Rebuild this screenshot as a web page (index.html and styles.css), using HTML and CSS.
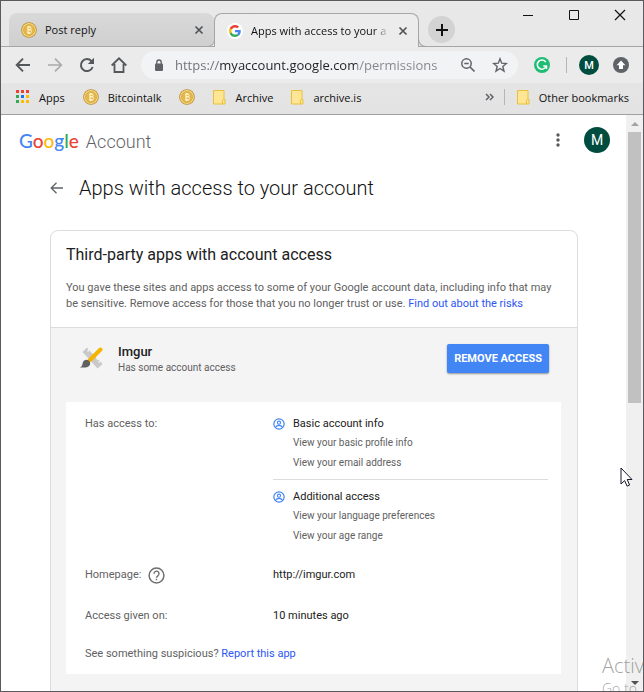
FILE: index.html
```html
<!DOCTYPE html>
<html lang="en">
<head>
<meta charset="utf-8">
<meta name="viewport" content="width=device-width, initial-scale=1">
<title>Apps with access to your account</title>
<link rel="stylesheet" href="styles.css">
</head>
<body>
<svg class="defs" aria-hidden="true">
  <symbol id="coin" viewBox="0 0 16 16">
    <circle cx="8" cy="8" r="7.8" fill="#b98a2b"/>
    <circle cx="8" cy="8" r="7" fill="#f8dc82"/>
    <circle cx="8" cy="8" r="5.500" fill="#e6b84c" stroke="#c99a35" stroke-width=".6"/>
    <path d="M6 5.200h2.800c1.700 0 1.700 2.600 0 2.600H7h2c2.100 0 2.100 3 0 3H6M7 5.200v5.600M7.400 4v1.200M8.900 4v1.200M7.400 10.800V12M8.900 10.800V12" fill="none" stroke="#fff8da" stroke-width="1"/>
  </symbol>
  <symbol id="folder" viewBox="0 0 13 15">
    <path d="M.5.5h10.500v9h1v4.500H.5z" fill="#ffe694" stroke="#e8c13c"/>
    <path d="M9.500 14v-3.500q0-1 1-1h.5" fill="none" stroke="#e8c13c"/>
  </symbol>
  <symbol id="close" viewBox="0 0 10 10"><path d="M1.500 1.500l7 7M8.500 1.500l-7 7" fill="none" stroke="#505357" stroke-width="1.700"/></symbol>
  <symbol id="person" viewBox="0 0 24 24">
    <circle cx="12" cy="12" r="10.300" fill="none" stroke="#4285f4" stroke-width="2.400"/>
    <circle cx="12" cy="9.300" r="3.100" fill="none" stroke="#4285f4" stroke-width="2.200"/>
    <path d="M5 18.500c2-3 4.500-3.700 7-3.700s5 .7 7 3.700" fill="none" stroke="#4285f4" stroke-width="2.400"/>
  </symbol>
</svg>
<div class="window">
  <header class="chrome">
    <div class="tabstrip">
      <div class="tab">
        <svg class="icon16"><use href="#coin"/></svg>
        <span class="tab-title">Post reply</span>
        <button class="plain" aria-label="Close tab"><svg class="icon10"><use href="#close"/></svg></button>
      </div>
      <div class="tab tab-active">
        <svg class="icon16" viewBox="0 0 16 16"><circle cx="8" cy="8" r="8" fill="#fff"/><g transform="translate(2 2) scale(.25)"><path fill="#ea4335" d="M24 9.500c3.540 0 6.710 1.220 9.210 3.600l6.850-6.850C35.900 2.380 30.470 0 24 0 14.620 0 6.510 5.380 2.560 13.220l7.980 6.190C12.430 13.720 17.740 9.500 24 9.500z"/><path fill="#4285f4" d="M46.980 24.550c0-1.570-.15-3.090-.38-4.550H24v9.020h12.940c-.58 2.960-2.260 5.480-4.780 7.180l7.730 6c4.510-4.180 7.090-10.360 7.090-17.650z"/><path fill="#fbbc05" d="M10.530 28.590c-.48-1.450-.76-2.990-.76-4.590s.27-3.140.76-4.590l-7.980-6.190C.92 16.460 0 20.120 0 24c0 3.880.92 7.540 2.560 10.780l7.970-6.190z"/><path fill="#34a853" d="M24 48c6.480 0 11.930-2.130 15.890-5.810l-7.730-6c-2.150 1.450-4.920 2.300-8.160 2.300-6.260 0-11.570-4.220-13.470-9.910l-7.980 6.190C6.510 42.620 14.620 48 24 48z"/></g></svg>
        <span class="tab-title tab-fade">Apps with access to your a</span>
        <button class="plain" aria-label="Close tab"><svg class="icon10"><use href="#close"/></svg></button>
      </div>
      <button class="plain new-tab" aria-label="New tab"><svg width="14" height="14" viewBox="0 0 14 14"><path d="M7 1v12M1 7h12" stroke="#111" stroke-width="2"/></svg></button>
      <div class="captions">
        <button class="plain" aria-label="Minimize"><svg width="12" height="12" viewBox="0 0 12 12"><path d="M1 6.500h10" stroke="#111"/></svg></button>
        <button class="plain" aria-label="Maximize"><svg width="12" height="12" viewBox="0 0 12 12"><path d="M1.500 1.500h9v9h-9z" fill="none" stroke="#111"/></svg></button>
        <button class="plain" aria-label="Close"><svg width="12" height="12" viewBox="0 0 12 12"><path d="M1 1l10 10M11 1L1 11" stroke="#111" stroke-width="1.200"/></svg></button>
      </div>
    </div>
    <div class="toolbar">
      <button class="plain" aria-label="Back"><svg width="16" height="16" viewBox="0 0 16 16"><path d="M15 8H2M8 1.700L1.700 8 8 14.300" fill="none" stroke="#54575b" stroke-width="1.900"/></svg></button>
      <button class="plain" aria-label="Forward"><svg width="16" height="16" viewBox="0 0 16 16"><path d="M1 8h13M8 1.700L14.300 8 8 14.300" fill="none" stroke="#ababab" stroke-width="1.700"/></svg></button>
      <button class="plain" aria-label="Reload"><svg width="16" height="16" viewBox="0 0 16 16"><path d="M13.600 10A6 6 0 1 1 12.500 4.200L13.500 5.300" fill="none" stroke="#54575b" stroke-width="2"/><path d="M15 .8V7H8.800z" fill="#54575b"/></svg></button>
      <button class="plain" aria-label="Home"><svg width="16" height="16" viewBox="0 0 16 16"><path d="M.7 8.500L8 1.300l7.300 7.200M3.500 7v8h9V7" fill="none" stroke="#54575b" stroke-width="1.800"/></svg></button>
      <div class="omnibox">
        <svg width="10" height="13" viewBox="0 0 10 13"><rect x="1" y="4.500" width="8" height="7.500" rx="1" fill="#5f6368"/><path d="M2.800 5V3.200a2.200 2.200 0 0 1 4.400 0V5" fill="none" stroke="#5f6368" stroke-width="1.300"/></svg>
        <input class="url" type="text" aria-label="Address" value="https://myaccount.google.com/permissions">
        <button class="plain" aria-label="Zoom"><svg width="16" height="16" viewBox="0 0 16 16"><circle cx="6.500" cy="6.500" r="4.700" fill="none" stroke="#5f6368" stroke-width="1.500"/><path d="M4.300 6.500h4.400M10 10l4.500 4.500" stroke="#5f6368" stroke-width="1.700"/></svg></button>
        <button class="plain" aria-label="Bookmark"><svg width="16" height="16" viewBox="0 0 16 16"><path d="M8 1.800l1.700 4.400 4.700.3-3.600 3 1.200 4.600L8 11.500l-4 2.600 1.200-4.600-3.600-3 4.700-.3z" fill="none" stroke="#5f6368" stroke-width="1.400"/></svg></button>
      </div>
      <div class="extensions">
        <button class="plain" aria-label="Grammar"><svg width="16" height="16" viewBox="0 0 16 16"><circle cx="8" cy="8" r="8" fill="#1fbd74"/><path d="M11.800 5.100A4.600 4.600 0 1 0 12.300 9H9.300M12.500 8.500v3.400" fill="none" stroke="#fff" stroke-width="1.500"/></svg></button>
        <span class="separator"></span>
        <button class="plain avatar avatar-small" aria-label="Profile">M</button>
        <button class="plain" aria-label="Update"><svg width="16" height="16" viewBox="0 0 16 16"><circle cx="8" cy="8" r="8" fill="#5f6368"/><path d="M8 3.600l4.400 4.600h-2.400v3.700H6V8.200H3.600z" fill="#fff"/></svg></button>
      </div>
    </div>
    <nav class="bookmarks">
      <a href="#"><svg width="14" height="14" viewBox="0 0 14 14"><path fill="#ea4335" d="M0 0h3v3H0zM5 0h3v3H5zM10 0h3v3h-3z"/><path fill="#34a853" d="M0 5h3v3H0zM0 10h3v3H0z"/><path fill="#1a73e8" d="M5 5h3v3H5z"/><path fill="#fbbc05" d="M10 5h3v3h-3zM10 10h3v3h-3zM5 10h3v3H5z"/></svg>Apps</a>
      <a href="#"><svg class="icon16"><use href="#coin"/></svg>Bitcointalk</a>
      <a href="#" aria-label="Forum"><svg class="icon16"><use href="#coin"/></svg></a>
      <a href="#"><svg class="folder"><use href="#folder"/></svg>Archive</a>
      <a href="#"><svg class="folder"><use href="#folder"/></svg>archive.is</a>
      <button class="plain more" aria-label="More bookmarks"><svg width="9" height="8" viewBox="0 0 9 8"><path d="M1 1l3 3-3 3M5 1l3 3-3 3" fill="none" stroke="#5f6368" stroke-width="1.500"/></svg></button>
      <span class="separator"></span>
      <a href="#"><svg class="folder"><use href="#folder"/></svg>Other bookmarks</a>
    </nav>
  </header>
  <div class="viewport">
    <main class="page">
      <div class="masthead">
        <a class="brand" href="#"><span class="google"><i class="b">G</i><i class="r">o</i><i class="y">o</i><i class="b">g</i><i class="g">l</i><i class="r">e</i></span><span class="product">Account</span></a>
        <button class="plain dots" aria-label="Menu"><svg width="4" height="14" viewBox="0 0 4 14"><circle cx="2" cy="2" r="1.700" fill="#55595e"/><circle cx="2" cy="7" r="1.700" fill="#55595e"/><circle cx="2" cy="12" r="1.700" fill="#55595e"/></svg></button>
        <button class="plain avatar" aria-label="Account">M</button>
      </div>
      <div class="heading">
        <button class="plain" aria-label="Back"><svg width="13" height="12" viewBox="0 0 13 12"><path d="M13 6H1.500M6.500 .7L1.200 6l5.300 5.300" fill="none" stroke="#5f6368" stroke-width="1.300"/></svg></button>
        <h1>Apps with access to your account</h1>
      </div>
      <section class="card">
        <div class="intro">
          <h2>Third-party apps with account access</h2>
          <p>You gave these sites and apps access to some of your Google account data, including info that may be sensitive. Remove access for those that you no longer trust or use. <a href="#">Find out about the risks</a></p>
        </div>
        <div class="app">
          <div class="app-head">
            <svg width="24" height="22" viewBox="0 0 24 22"><path d="M3.500 5L8 .5l1.500 2-1.500 1.500 1 1 1.500-1.500 4.500 5 2 2 1 3 1.500-1 1 1-1.500 1.500 1 1 1.500-1.500 2 2.500-5 4.500z" fill="#c9c9c9"/><path d="M11 13L21.500 2.500" stroke="#f4b400" stroke-width="4" stroke-linecap="round"/><path d="M.7 20.300c2.600-.7 2.500-2.200 3-4.300.9-3.300 4.300-4.100 6.300-2.200s1.500 5.200-1.500 6.200c-2.100.7-5.300.6-7.800.3z" fill="#616161"/></svg>
            <div class="app-name"><h3>Imgur</h3><span>Has some account access</span></div>
            <button class="remove">REMOVE ACCESS</button>
          </div>
          <dl class="details">
            <dt>Has access to:</dt>
            <dd class="scopes">
              <div class="scope">
                <svg class="person"><use href="#person"/></svg>
                <div><h4>Basic account info</h4><p>View your basic profile info</p><p>View your email address</p></div>
              </div>
              <div class="scope">
                <svg class="person"><use href="#person"/></svg>
                <div><h4>Additional access</h4><p>View your language preferences</p><p>View your age range</p></div>
              </div>
            </dd>
            <dt class="with-help">Homepage: <button class="plain" aria-label="Help"><svg width="17" height="17" viewBox="0 0 17 17"><circle cx="8.500" cy="8.500" r="7.400" fill="none" stroke="#6f6f6f" stroke-width="1.500"/><path d="M6 6.700a2.500 2.500 0 1 1 3.800 2.100c-.9.600-1.300 1-1.300 2M8.500 11.800v1.500" fill="none" stroke="#6f6f6f" stroke-width="1.400"/></svg></button></dt>
            <dd class="value">http://imgur.com</dd>
            <dt>Access given on:</dt>
            <dd class="value">10 minutes ago</dd>
            <dt class="report">See something suspicious? <a href="#">Report this app</a></dt>
          </dl>
        </div>
      </section>
    </main>
    <div class="scrollbar">
      <button class="plain" aria-label="Scroll up"><svg width="8" height="4" viewBox="0 0 8 4"><path d="M4 0l4 4H0z" fill="#a3a3a3"/></svg></button>
      <div class="track"><div class="thumb"></div></div>
      <button class="plain" aria-label="Scroll down"><svg width="8" height="4" viewBox="0 0 8 4"><path d="M0 0h8L4 4z" fill="#505050"/></svg></button>
    </div>
  </div>
  <div class="watermark"><span>Activ</span><small>Go to</small></div>
  <svg class="cursor" width="13" height="20" viewBox="0 0 13 20"><path d="M1 1v16l3.600-3.400 2.500 5.500 2.500-1.100-2.400-5.500H12z" fill="#fff" stroke="#15152a"/></svg>
</div>
</body>
</html>
```
FILE: styles.css
```css
* { box-sizing: border-box; }
body { margin: 0; font-family: Roboto, "Liberation Sans", sans-serif; color: #212121; }
h1, h2, h3, h4, p, dl, dd { margin: 0; font-weight: 400; }
a { color: #2a56f5; text-decoration: none; }
svg { display: block; flex: none; }
.defs { position: absolute; width: 0; height: 0; }
.plain { display: flex; align-items: center; justify-content: center; flex: none; padding: 0; border: 0; background: none; }
.icon16 { width: 16px; height: 16px; }
.icon10 { width: 10px; height: 10px; }
.window { position: relative; display: flex; flex-direction: column; height: 100vh; border: 1px solid #5b595c; overflow: hidden; background: #fff; }

/* Browser frame */
.chrome { flex: none; border-bottom: 1px solid #a0a0a0; background: linear-gradient(#e9e9e9, #e3e3e3); font-family: "Open Sans", sans-serif; font-size: 11px; color: #111; }
.tabstrip { display: flex; height: 46px; padding: 12px 0 0 8px; border-bottom: 1px solid #a6a6a6; }
.tab { display: flex; align-items: center; gap: 8px; width: 205px; height: 33px; padding: 0 10px 0 12px; border-radius: 8px 8px 8px 0; background: linear-gradient(#d9d9d9, #cfcfcf); }
.tab-title { flex: 1; overflow: hidden; white-space: nowrap; }
.tab-active { position: relative; height: 34px; border: 1px solid #a6a6a6; border-bottom: 0; border-radius: 8px 8px 0 0; background: #ececec; }
.tab-active::before, .tab-active::after { content: ""; position: absolute; bottom: 0; width: 9px; height: 9px; border-bottom: 1px solid #a6a6a6; }
.tab-active::before { right: 100%; border-right: 1px solid #a6a6a6; border-bottom-right-radius: 8px; }
.tab-active::after { left: 100%; border-left: 1px solid #a6a6a6; border-bottom-left-radius: 8px; }
.tab-fade { mask-image: linear-gradient(to right, #000 88%, transparent); }
.new-tab { width: 27px; height: 27px; margin: 3px 0 0 9px; border-radius: 50%; background: #d3d3d3; }
.captions { display: flex; gap: 34px; margin: -4px 17px 0 auto; height: 12px; }
.toolbar { display: flex; align-items: center; gap: 16px; height: 36px; padding: 0 14px; background: #ebebeb; }
.omnibox { display: flex; flex: 1; align-items: center; gap: 16px; min-width: 0; height: 28px; margin-left: -2px; padding: 0 10px 0 13px; border-radius: 14px; background: #f1f3f4; }
.url { flex: 1; min-width: 0; margin-left: -5px; padding: 0; border: 0; outline: 0; font: 13px "Open Sans", sans-serif; color: transparent; background: linear-gradient(to right, #6b7075 45px, #202124 45px, #202124 182px, #80868b 182px); background-clip: text; -webkit-background-clip: text; }
.extensions { display: flex; align-items: center; gap: 14px; }
.separator { width: 1px; height: 16px; background: #b5b5b5; }
.avatar { width: 26px; height: 26px; border-radius: 50%; background: #004d40; color: #fff; font: 14px Roboto, sans-serif; }
.avatar-small { width: 20px; height: 20px; font-size: 11px; font-weight: 500; }
.extensions .separator { margin-left: 2px; margin-right: -2px; }
.bookmarks { display: flex; align-items: center; gap: 18px; height: 31px; padding: 0 14px 3px 15px; }
.bookmarks a { display: flex; align-items: center; gap: 9px; color: #111; white-space: nowrap; }
.folder { width: 13px; height: 15px; }
.more { margin-left: auto; margin-right: -8px; }
.bookmarks .separator { margin-right: -6px; }

/* Page */
.viewport { display: flex; flex: 1; min-height: 0; }
.page { flex: 1; min-width: 0; overflow: hidden; }
.masthead { display: flex; align-items: center; gap: 24px; height: 50px; padding: 0 16px 0 18px; }
.brand { display: flex; align-items: baseline; gap: 7px; margin-right: auto; font-size: 18px; font-weight: 300; color: #5f6368; }
.google { font: 500 19px Lato, sans-serif; }
.google i { font-style: normal; }
.b { color: #4285f4; }
.r { color: #ea4335; }
.y { color: #fbbc05; }
.g { color: #34a853; }
.heading { display: flex; align-items: center; gap: 16px; height: 46px; padding: 0 49px; }
h1 { font-size: 20px; font-weight: 300; color: #111; }
.card { margin: 19px 48px 0 49px; border: 1px solid #dadce0; border-radius: 8px; overflow: hidden; }
.intro { padding: 13px 14px 15px 15px; }
h2 { font-size: 16px; line-height: 22px; }
.intro p { margin-top: 14px; font-size: 11px; line-height: 16px; color: #616161; }
.app { padding: 15px 16px 40px 15px; border-top: 1px solid #dadce0; background: #f4f4f4; }
.app-head { display: flex; align-items: center; gap: 15px; padding: 0 12px 0 13px; height: 30px; }
.app-name { flex: 1; padding-top: 4px; font-size: 10px; line-height: 16px; color: #616161; }
h3 { font-size: 13px; line-height: 16px; font-weight: 500; color: #212121; }
.remove { height: 29px; padding: 0 7px; border: 0; border-radius: 2px; background: #4285f4; box-shadow: 0 1px 2px rgba(0,0,0,.4); color: #fff; font: 700 11px Roboto, sans-serif; white-space: nowrap; }
.details { display: grid; grid-template-columns: 188px 1fr; margin-top: 29px; padding: 14px 13px 12px 19px; background: #fff; font-size: 11px; line-height: 16px; color: #616161; }
.scope { display: flex; gap: 8px; padding-bottom: 8px; }
.scope + .scope { border-top: 1px solid #dadce0; padding-top: 9px; }
.person { width: 12px; height: 12px; margin-top: 2px; }
h4 { font-size: 11px; line-height: 15px; color: #212121; }
.scope p { margin-top: 4px; font-size: 10px; line-height: 16px; }
.scopes { margin-bottom: 15px; }
.with-help { display: flex; align-items: center; gap: 7px; height: 16px; }
.value { margin-bottom: 25px; color: #212121; }
.details .report { grid-column: 1 / -1; margin-top: -3px; }

.scrollbar { display: flex; flex-direction: column; flex: none; width: 17px; background: #f0f0f0; }
.scrollbar button { height: 17px; }
.track { flex: 1; padding: 0 2px; }
.thumb { height: 50%; background: #c1c1c1; }

/* Overlays */
.watermark { position: absolute; right: -1px; bottom: 0; width: 42px; height: 38px; overflow: hidden; color: rgba(110,110,110,.65); font: 300 20px "Open Sans", sans-serif; line-height: 26px; white-space: nowrap; pointer-events: none; }
.watermark span, .watermark small { display: block; }
.watermark small { font-size: 14px; line-height: 20px; }
.cursor { position: absolute; left: 619px; top: 466px; }
```
